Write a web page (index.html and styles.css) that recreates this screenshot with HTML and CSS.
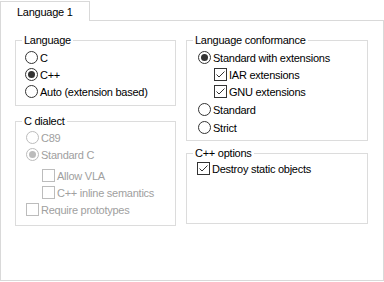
FILE: index.html
```html
<!DOCTYPE html>
<html lang="en">
<head>
    <meta charset="UTF-8">
    <title>Language 1</title>
    <link rel="stylesheet" href="styles.css">
</head>
<body>
    <div class="tabstrip">
        <div class="tab">Language 1</div>
        <div class="tab-fill"></div>
    </div>
    <div class="panel">
        <div class="column">
            <fieldset class="group group-language">
                <legend>Language</legend>
                <div class="group-body">
                    <div class="option"><span class="radio"></span>C</div>
                    <div class="option"><span class="radio checked"></span>C++</div>
                    <div class="option"><span class="radio"></span>Auto (extension based)</div>
                </div>
            </fieldset>
            <fieldset class="group group-dialect">
                <legend>C dialect</legend>
                <div class="group-body">
                    <div class="option disabled"><span class="radio"></span>C89</div>
                    <div class="option disabled"><span class="radio checked"></span>Standard C</div>
                    <div class="option disabled sub first-sub"><span class="checkbox"></span>Allow VLA</div>
                    <div class="option disabled sub"><span class="checkbox"></span>C++ inline semantics</div>
                    <div class="option disabled"><span class="checkbox"></span>Require prototypes</div>
                </div>
            </fieldset>
        </div>
        <div class="column">
            <fieldset class="group group-conformance">
                <legend>Language conformance</legend>
                <div class="group-body">
                    <div class="option"><span class="radio checked"></span>Standard with extensions</div>
                    <div class="option sub">
                        <span class="checkbox"><svg viewBox="0 0 11 11" width="11" height="11"><polyline points="1.5,5.5 4,8 9.5,2.5" /></svg></span>IAR extensions
                    </div>
                    <div class="option sub">
                        <span class="checkbox"><svg viewBox="0 0 11 11" width="11" height="11"><polyline points="1.5,5.5 4,8 9.5,2.5" /></svg></span>GNU extensions
                    </div>
                    <div class="option spaced"><span class="radio"></span>Standard</div>
                    <div class="option spaced"><span class="radio"></span>Strict</div>
                </div>
            </fieldset>
            <fieldset class="group group-cpp">
                <legend>C++ options</legend>
                <div class="group-body">
                    <div class="option">
                        <span class="checkbox"><svg viewBox="0 0 11 11" width="11" height="11"><polyline points="1.5,5.5 4,8 9.5,2.5" /></svg></span>Destroy static objects
                    </div>
                </div>
            </fieldset>
        </div>
    </div>
</body>
</html>
```

FILE: styles.css
```css
body {
    font-family: "Liberation Sans", Arial, sans-serif;
    font-size: 11px;
    letter-spacing: -0.25px;
    color: #000;
    background-color: #fff;
    margin: 0;
    padding: 1px 0 0;
}
.tabstrip {
    display: flex;
    height: 20px;
}
.tab {
    width: 90px;
    box-sizing: border-box;
    border: 1px solid #d9d9d9;
    border-bottom: none;
    padding: 4px 0 0 16px;
    line-height: 13px;
}
.tab-fill {
    flex: 1;
    border-bottom: 1px solid #d9d9d9;
}
.panel {
    display: grid;
    grid-template-columns: 161px 182px;
    column-gap: 10px;
    align-items: start;
    height: 260px;
    box-sizing: border-box;
    border: 1px solid #d9d9d9;
    border-top: none;
    padding: 13px 0 0 14px;
}
.column {
    display: flex;
    flex-direction: column;
}
.group {
    margin: 0;
    padding: 0;
    border: 1px solid #dcdcdc;
    min-width: 0;
}
.group legend {
    margin-left: 6px;
    padding: 0 2px;
    line-height: 13px;
}
.group-body {
    padding: 2px 0 5px 9px;
}
.group-dialect {
    margin-top: 9px;
}
.group-dialect .group-body {
    padding: 1px 0 7px 10px;
}
.group-conformance .group-body {
    padding: 2px 0 4px 11px;
}
.group-cpp {
    margin-top: 6px;
}
.group-cpp .group-body {
    padding: 0 0 46px 10px;
}
.option {
    display: flex;
    align-items: center;
    height: 17px;
    white-space: nowrap;
}
.option.sub {
    margin-left: 16px;
}
.option.first-sub {
    margin-top: 4px;
}
.option.spaced {
    margin-top: 1px;
}
.option.disabled {
    color: #a0a0a0;
}
.radio {
    width: 13px;
    height: 13px;
    box-sizing: border-box;
    border: 1px solid #333;
    border-radius: 50%;
    margin-right: 2px;
    display: flex;
    align-items: center;
    justify-content: center;
    flex-shrink: 0;
}
.radio.checked::after {
    content: "";
    width: 7px;
    height: 7px;
    border-radius: 50%;
    background-color: #333;
}
.checkbox {
    width: 13px;
    height: 13px;
    box-sizing: border-box;
    border: 1px solid #333;
    margin-right: 2px;
    display: flex;
    flex-shrink: 0;
}
.checkbox svg {
    fill: none;
    stroke: #333;
    stroke-width: 1;
}
.disabled .radio,
.disabled .checkbox {
    border-color: #bcbcbc;
}
.disabled .radio.checked::after {
    background-color: #bcbcbc;
}
```
